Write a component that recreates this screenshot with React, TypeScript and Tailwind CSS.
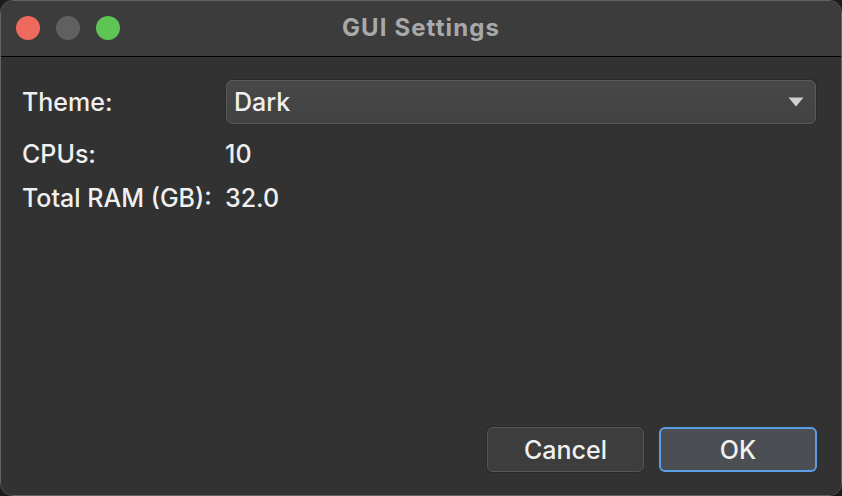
export default function App() {
  return (
    <div className="w-[842px] h-[496px] bg-[#1c1c1c] font-['Inter','Liberation_Sans',sans-serif]">
      <div className="w-full h-full rounded-[13px] border border-[#626262] overflow-hidden flex flex-col">
        {/* Title bar */}
        <div className="relative h-[56px] bg-[#3c3c3c] border-b border-black flex items-center justify-center shrink-0">
          <div className="absolute left-[15px] top-[15px] flex gap-[16px]">
            <span className="w-[24px] h-[24px] rounded-full bg-[#ee6a5e]" />
            <span className="w-[24px] h-[24px] rounded-full bg-[#606060]" />
            <span className="w-[24px] h-[24px] rounded-full bg-[#5ec454]" />
          </div>
          <h1 className="text-[24px] leading-[28px] font-bold text-[#a9a9a9] tracking-[1.1px] -mt-[2px]">GUI Settings</h1>
        </div>

        {/* Body */}
        <div className="flex-1 bg-[#323232] flex flex-col pl-[21px] pr-[23px] pt-[23px] pb-[23px]">
          <div className="grid grid-cols-[204px_1fr] gap-y-[17px] items-center text-[25px] font-[450] text-[#f0f0f0] pr-[2px]">
            <span className="leading-[28px]">Theme:</span>
            <button className="h-[44px] rounded-[6px] border border-[#5a5a5a] bg-gradient-to-b from-[#484848] to-[#424242] flex items-center justify-between pl-[7px] pr-[11px] text-left shadow-[0_0_0_1px_#2a2a2a]">
              <span className="leading-[28px]">Dark</span>
              <svg width="16" height="10" viewBox="0 0 16 10">
                <path d="M0.5 0.5 L15.5 0.5 L8 9.5 Z" fill="#cfcfcf" />
              </svg>
            </button>
            <span className="leading-[27px]">CPUs:</span>
            <span className="leading-[27px] -ml-[1px]">10</span>
            <span className="leading-[27px]">Total RAM (GB):</span>
            <span className="leading-[27px] -ml-[1px]">32.0</span>
          </div>

          <div className="mt-auto flex justify-end gap-[15px] pr-[1px]">
            <button className="w-[157px] h-[45px] rounded-[6px] border border-[#575757] bg-[#3d3d3d] text-[25px] leading-[28px] font-[450] text-[#f0f0f0] shadow-[0_0_0_1px_#2a2a2a]">
              Cancel
            </button>
            <button className="w-[158px] h-[45px] rounded-[6px] border-2 border-[#5b9ee6] bg-[#4b4e53] text-[25px] leading-[28px] font-[450] text-[#f0f0f0]">
              OK
            </button>
          </div>
        </div>
      </div>
    </div>
  );
}
